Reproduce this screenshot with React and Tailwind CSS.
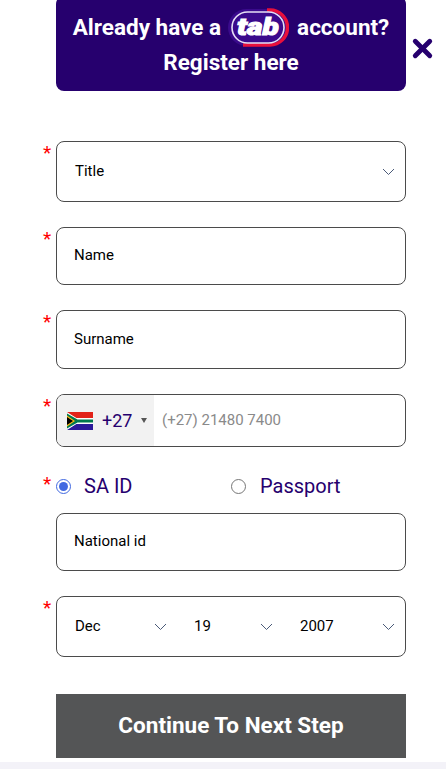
import { X } from 'lucide-react';

const Star = () => (
  <span className="w-[14px] shrink-0 text-[19px] leading-[19px] text-[#ff0000] pt-[2px] pl-[1px]">*</span>
);

const Chevron = ({ className = '' }) => (
  <svg width="13" height="8" viewBox="0 0 13 8" fill="none" className={className}>
    <path d="M1 1l5.5 5.5L12 1" stroke="#4a5a78" strokeWidth="1" />
  </svg>
);

const Row = ({ children, className = '' }) => (
  <div className={`flex pl-[42px] ${className}`}>
    <Star />
    {children}
  </div>
);

const TextField = ({ label, className = 'h-[59px]' }) => (
  <div className={`w-[350px] border border-[#4b4b4b] rounded-lg flex items-center pl-[17px] text-[15px] text-black ${className}`}>
    {label}
  </div>
);

const Flag = () => (
  <svg width="26" height="18" viewBox="0 0 26 18" className="shrink-0">
    <rect width="26" height="6" fill="#e2231a" />
    <rect y="12" width="26" height="6" fill="#2b1a9a" />
    <rect y="6" width="26" height="6" fill="#fff" />
    <path d="M0 0l11 7h15v4H11L0 18z" fill="#fff" />
    <path d="M0 1.5L10.5 7.5H26v3H10.5L0 16.5z" fill="#007a4d" />
    <path d="M0 3.5L8 9l-8 5.5z" fill="#ffb612" />
    <path d="M0 5l6 4-6 4z" fill="#000" />
  </svg>
);

const TabLogo = () => (
  <svg width="62" height="39" viewBox="0 0 62 39" className="ml-[6px] mr-[8px] shrink-0">
    <rect x="1" y="1" width="60" height="37" rx="18.5" fill="#3a0a8c" />
    <path d="M40 2h3a17.5 17.5 0 0 1 0 35H16" fill="none" stroke="#e8103c" strokeWidth="3.5" />
    <rect x="5" y="4" width="52" height="31" rx="15.5" fill="#3a0a8c" stroke="#e6e0f5" strokeWidth="1.6" />
    <text
      x="31"
      y="27"
      textAnchor="middle"
      fill="#fff"
      stroke="#fff"
      strokeWidth="1"
      fontSize="24"
      fontWeight="900"
      fontStyle="italic"
      fontFamily="Roboto, sans-serif"
      textLength="42"
      lengthAdjust="spacingAndGlyphs"
    >
      tab
    </text>
  </svg>
);

export default function App() {
  return (
    <div className="w-[446px] h-[769px] overflow-hidden bg-white font-['Roboto',sans-serif] flex flex-col">
      <div className="flex items-center pl-[56px] -mt-[4px]">
        <div className="w-[350px] h-[95px] pb-[3px] bg-[#26006e] rounded-lg flex flex-col items-center justify-end text-white font-bold text-[22.5px] leading-[35px]">
          <div className="flex items-center h-[35px]">
            Already have a
            <TabLogo />
            account?
          </div>
          <div className="pb-[8px]">Register here</div>
        </div>
        <X size={29} strokeWidth={4} className="ml-[2px] mt-[9px] text-[#26006e]" />
      </div>

      <Row className="mt-[50px]">
        <div className="w-[350px] h-[61px] border border-[#4b4b4b] rounded-lg flex items-center justify-between pl-[18px] pr-[10px] text-[15px] text-black">
          Title
          <Chevron />
        </div>
      </Row>

      <Row className="mt-[25px]">
        <TextField label="Name" className="h-[58px] pb-[2px]" />
      </Row>

      <Row className="mt-[25px]">
        <TextField label="Surname" />
      </Row>

      <Row className="mt-[25px]">
        <div className="w-[350px] h-[53px] border border-[#4b4b4b] rounded-lg overflow-hidden flex items-center">
          <div className="h-full w-[97px] bg-[#f2f2f2] flex items-center pl-[10px]">
            <Flag />
            <span className="ml-[9px] text-[18px] text-[#26006e]">+27</span>
            <span className="ml-[9px] border-x-[3px] border-x-transparent border-t-[5px] border-t-[#555]" />
          </div>
          <span className="ml-[8px] text-[15px] text-[#8a8a8a]">(+27) 21480 7400</span>
        </div>
      </Row>

      <Row className="mt-[25px] h-[41px]">
        <div className="w-[350px] flex items-start pt-[2px] text-[20px] leading-[24px] text-[#26006e]">
          <span className="w-[175px] flex items-center">
            <span className="w-[15px] h-[15px] rounded-full border border-[#4169e1] flex items-center justify-center">
              <span className="w-[9px] h-[9px] rounded-full bg-[#4169e1]" />
            </span>
            <span className="ml-[13px]">SA ID</span>
          </span>
          <span className="flex items-center">
            <span className="w-[15px] h-[15px] rounded-full border border-[#767676]" />
            <span className="ml-[14px]">Passport</span>
          </span>
        </div>
      </Row>

      <div className="pl-[56px]">
        <TextField label="National id" className="h-[58px] pb-[2px]" />
      </div>

      <Row className="mt-[25px]">
        <div className="w-[350px] h-[61px] border border-[#4b4b4b] rounded-lg grid grid-cols-[119px_106px_1fr] items-center pl-[18px] pr-[10px] text-[15px] text-black">
          <span className="flex items-center justify-between pr-[27px]">
            Dec
            <Chevron />
          </span>
          <span className="flex items-center justify-between pr-[27px]">
            19
            <Chevron />
          </span>
          <span className="flex items-center justify-between">
            2007
            <Chevron />
          </span>
        </div>
      </Row>

      <div className="pl-[56px] mt-[37px]">
        <button className="w-[350px] h-[64px] bg-[#545556] text-white font-bold text-[22.5px]">
          Continue To Next Step
        </button>
      </div>

      <div className="mt-[4px] flex-1 bg-[#f3f2f8]" />
    </div>
  );
}
